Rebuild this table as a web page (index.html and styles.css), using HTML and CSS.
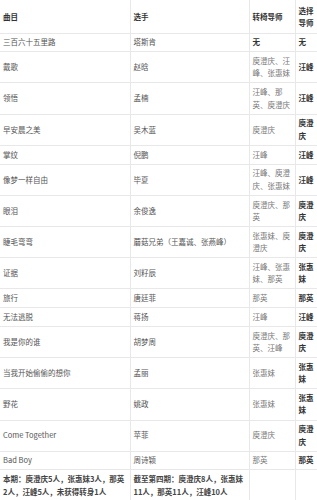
FILE: index.html
```html
<!DOCTYPE html>
<html lang="zh-CN">
<head>
<meta charset="utf-8">
<title>表</title>
<link rel="stylesheet" href="styles.css">
</head>
<body>
<table class="tbl">
  <colgroup>
    <col class="c1"><col class="c2"><col class="c3"><col class="c4">
  </colgroup>
  <tr class="head"><td>曲目</td><td>选手</td><td>转椅导师</td><td class="pick">选择导师</td></tr>
  <tr><td>三百六十五里路</td><td>塔斯肯</td><td class="strong">无</td><td class="pick">无</td></tr>
  <tr><td>戴歌</td><td>赵晗</td><td class="coach">庾澄庆、汪峰、张惠妹</td><td class="pick">汪峰</td></tr>
  <tr><td>领悟</td><td>孟楠</td><td class="coach">汪峰、那英、庾澄庆</td><td class="pick">汪峰</td></tr>
  <tr><td>早安晨之美</td><td>吴木蓝</td><td class="coach">庾澄庆</td><td class="pick">庾澄庆</td></tr>
  <tr><td>掌纹</td><td>倪鹏</td><td class="coach">汪峰</td><td class="pick">汪峰</td></tr>
  <tr><td>像梦一样自由</td><td>毕夏</td><td class="coach">汪峰、庾澄庆、张惠妹</td><td class="pick">汪峰</td></tr>
  <tr><td>眼泪</td><td>余俊逸</td><td class="coach">庾澄庆、那英</td><td class="pick">庾澄庆</td></tr>
  <tr><td>睫毛弯弯</td><td>蘑菇兄弟（王嘉诚、张燕峰）</td><td class="coach">张惠妹、庾澄庆</td><td class="pick">庾澄庆</td></tr>
  <tr><td>证据</td><td>刘籽辰</td><td class="coach">汪峰、张惠妹、那英</td><td class="pick">张惠妹</td></tr>
  <tr><td>旅行</td><td>唐廷菲</td><td class="coach">那英</td><td class="pick">那英</td></tr>
  <tr><td>无法逃脱</td><td>蒋扬</td><td class="coach">汪峰</td><td class="pick">汪峰</td></tr>
  <tr><td>我是你的谁</td><td>胡梦周</td><td class="coach">庾澄庆、那英、汪峰</td><td class="pick">庾澄庆</td></tr>
  <tr><td>当我开始偷偷的想你</td><td>孟丽</td><td class="coach">张惠妹</td><td class="pick">张惠妹</td></tr>
  <tr><td>野花</td><td>姚政</td><td class="coach">张惠妹</td><td class="pick">张惠妹</td></tr>
  <tr><td>Come Together</td><td>苹菲</td><td class="coach">庾澄庆</td><td class="pick">庾澄庆</td></tr>
  <tr><td>Bad Boy</td><td>周诗颖</td><td class="coach">那英</td><td class="pick">那英</td></tr>
  <tr class="sum"><td>本期：庾澄庆5人，张惠妹3人，那英2人，汪峰5人，未获得转身1人</td><td>截至第四期：庾澄庆8人，张惠妹11人，那英11人，汪峰10人</td><td></td><td></td></tr>
</table>
</body>
</html>
```

FILE: styles.css
```css
html, body {
  margin: 0;
  padding: 0;
  background: #ffffff;
}

.tbl {
  width: 317px;
  table-layout: fixed;
  border-collapse: collapse;
  font-family: "Noto Sans CJK SC", "Noto Sans", sans-serif;
  font-size: 7.5px;
  line-height: 12.4px;
  color: #555555;
}

.c1 { width: 130px; }
.c2 { width: 119px; }
.c3 { width: 46px; }
.c4 { width: 22px; }

.tbl td {
  border: 1px solid #e8e8e8;
  padding: 2.7px 3px;
  vertical-align: middle;
  word-break: break-all;
}

.tbl tr:first-child td {
  border-top: none;
}

.tbl td:first-child {
  border-left: none;
}

.tbl td.pick {
  padding: 2.7px 2px 2.7px 3px;
  border-right: none;
  font-weight: bold;
  color: #333333;
}

.tbl td.coach {
  color: #777777;
}

.tbl td.strong {
  font-weight: bold;
  color: #333333;
}

.head td {
  font-weight: bold;
  color: #333333;
}

.tbl .head td {
  padding-top: 5px;
}

.sum td {
  font-weight: bold;
  color: #444444;
}
```
